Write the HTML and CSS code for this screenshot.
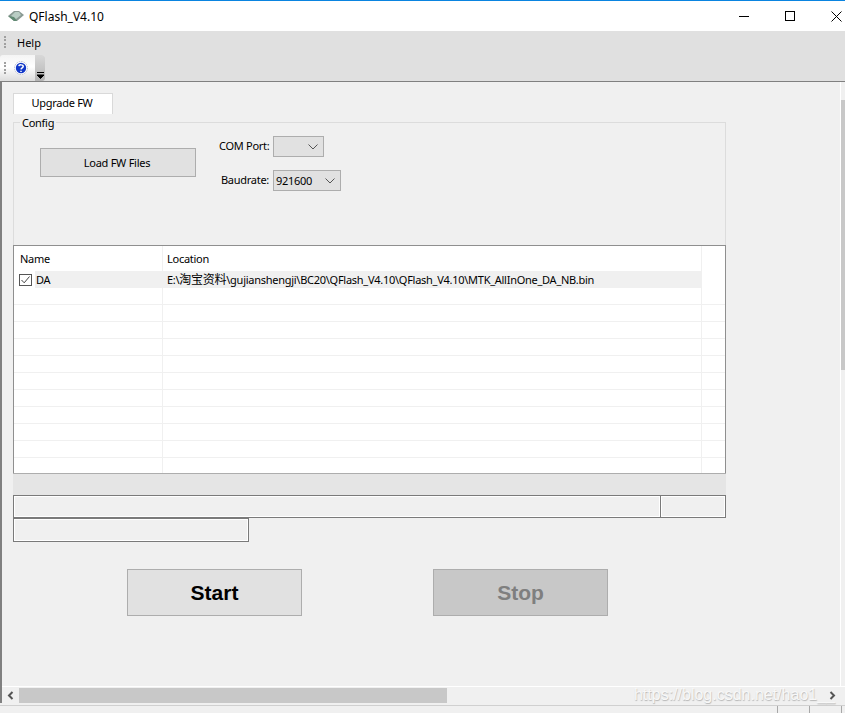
FILE: index.html
```html
<!DOCTYPE html>
<html lang="en">
<head>
  <meta charset="UTF-8">
  <title>QFlash_V4.10</title>
  <link rel="stylesheet" href="styles.css">
</head>
<body>
  <div class="window">
    <div class="titlebar">
      <svg class="app-icon" width="16" height="10" viewBox="0 0 16 10">
        <path d="M0 5 L6 0 H11 L16 4 L9 10 H6 Z" fill="#8a9a94"/>
        <path d="M3 5 L7 1 H11 L13 4 L8 8 Z" fill="#b9cdc4"/>
        <path d="M0 5 L6 10 H9 L6 6 Z" fill="#5f8a72"/>
      </svg>
      <span class="app-title">QFlash_V4.10</span>
      <div class="win-buttons">
        <svg width="11" height="11" viewBox="0 0 11 11"><path d="M0 5.5 H10" stroke="#000" fill="none"/></svg>
        <svg width="11" height="11" viewBox="0 0 11 11"><rect x="0.5" y="0.5" width="9" height="9" stroke="#000" fill="none"/></svg>
        <svg width="11" height="11" viewBox="0 0 11 11"><path d="M0.5 0.5 L10.5 10.5 M10.5 0.5 L0.5 10.5" stroke="#000" fill="none"/></svg>
      </div>
    </div>

    <div class="menubar">
      <span class="grip"></span>
      <span class="menu-item">Help</span>
    </div>

    <div class="toolbar">
      <div class="tool-group">
        <span class="grip"></span>
        <svg class="help-icon" width="14" height="14" viewBox="0 0 14 14">
          <circle cx="7" cy="7" r="6.5" fill="#fff" stroke="#b8bcd0" stroke-dasharray="1.5 1"/>
          <circle cx="7" cy="7" r="5.2" fill="#1238c8"/>
          <path d="M4.8 5.2 C5 3.4 9.2 3.4 9.2 5.4 C9.2 6.8 7.2 6.8 7 8.4 M7 9.8 V11" stroke="#fff" stroke-width="1.5" fill="none"/>
        </svg>
        <div class="tool-overflow">
          <svg width="7" height="7" viewBox="0 0 7 7"><path d="M0 0.5 H7 M0 3 H7 L3.5 6.5 Z" stroke="#000" fill="#000" stroke-width="1"/></svg>
        </div>
      </div>
    </div>

    <div class="main">
      <div class="content">
        <div class="tab">Upgrade FW</div>

        <div class="group">
          <span class="group-title">Config</span>
          <button class="btn load-btn">Load FW Files</button>
          <div class="fields">
            <div class="field">
              <label>COM Port:</label>
              <div class="combo combo-com"><span></span><svg width="10" height="6" viewBox="0 0 10 6"><path d="M0.5 0.5 L5 5 L9.5 0.5" stroke="#555" fill="none"/></svg></div>
            </div>
            <div class="field">
              <label>Baudrate:</label>
              <div class="combo combo-baud"><span>921600</span><svg width="10" height="6" viewBox="0 0 10 6"><path d="M0.5 0.5 L5 5 L9.5 0.5" stroke="#555" fill="none"/></svg></div>
            </div>
          </div>
        </div>

        <div class="file-table">
          <table>
            <colgroup><col class="col-name"><col class="col-location"><col class="col-rest"></colgroup>
            <thead>
              <tr><th>Name</th><th class="th-location">Location</th><th></th></tr>
            </thead>
            <tbody>
              <tr class="selected">
                <td class="name-cell">
                  <span class="check"><svg width="13" height="12" viewBox="0 0 13 12"><rect x="0.5" y="0.5" width="12" height="11" fill="#fff" stroke="#555"/><path d="M2.5 6 L5.2 8.8 L10.5 2.5" stroke="#444" fill="none"/></svg></span>
                  <span class="name-text">DA</span>
                </td>
                <td>E:\<span class="cjk">淘宝资料</span>\gujianshengji\BC20\QFlash_V4.10\QFlash_V4.10\MTK_AllInOne_DA_NB.bin</td>
                <td class="blank"></td>
              </tr>
              <tr><td></td><td></td><td></td></tr>
              <tr><td></td><td></td><td></td></tr>
              <tr><td></td><td></td><td></td></tr>
              <tr><td></td><td></td><td></td></tr>
              <tr><td></td><td></td><td></td></tr>
              <tr><td></td><td></td><td></td></tr>
              <tr><td></td><td></td><td></td></tr>
              <tr><td></td><td></td><td></td></tr>
              <tr><td></td><td></td><td></td></tr>
              <tr><td></td><td></td><td></td></tr>
              <tr class="last"><td></td><td></td><td></td></tr>
            </tbody>
          </table>
        </div>

        <div class="gray-bar"></div>

        <div class="status-row">
          <div class="sunken status-long"></div>
          <div class="sunken status-short"></div>
        </div>
        <div class="sunken status-small"></div>

        <div class="actions">
          <button class="btn big-btn">Start</button>
          <button class="btn big-btn disabled">Stop</button>
        </div>
      </div>

      <div class="vscroll"><div class="vthumb"></div></div>

      <div class="hscroll">
        <svg class="arrow" width="7" height="9" viewBox="0 0 7 9"><path d="M5.5 1 L2 4.5 L5.5 8" stroke="#555" stroke-width="2" fill="none"/></svg>
        <div class="htrack"><div class="hthumb"></div></div>
        <svg class="arrow" width="7" height="9" viewBox="0 0 7 9"><path d="M1.5 1 L5 4.5 L1.5 8" stroke="#555" stroke-width="2" fill="none"/></svg>
      </div>
      <span class="watermark">https://blog.csdn.net/hao1__</span>
    </div>

    <div class="statusbar">
      <span class="sep"></span>
      <span class="sep"></span>
      <span class="sep"></span>
    </div>
  </div>
</body>
</html>
```

FILE: styles.css
```css
* {
  box-sizing: border-box;
}
body {
  margin: 0;
  background: #f0f0f0;
  color: #000;
  font-family: "Noto Sans", "Noto Sans CJK SC", sans-serif;
  font-size: 11px;
  letter-spacing: -0.27px;
}
.window {
  display: flex;
  flex-direction: column;
  width: 845px;
  height: 713px;
  overflow: hidden;
}
.titlebar {
  display: flex;
  align-items: center;
  height: 31px;
  padding-left: 8px;
  background: #fff;
  border-top: 1px solid #0a84e0;
}
.app-icon {
  margin-right: 5px;
}
.app-title {
  font-size: 12px;
  letter-spacing: 0;
}
.win-buttons {
  display: flex;
  gap: 35px;
  margin-left: auto;
  margin-right: 3px;
}
.menubar {
  display: flex;
  align-items: center;
  height: 24px;
  padding: 0 0 2px 4px;
  background: #e0e0e0;
}
.grip {
  display: block;
  width: 2px;
  height: 12px;
  border-left: 2px dotted #a0a0a0;
}
.menu-item {
  margin-left: 11px;
  letter-spacing: 0;
}
.toolbar {
  height: 27px;
  background: #e0e0e0;
  border-bottom: 1px solid #808080;
}
.tool-group {
  display: flex;
  align-items: center;
  width: 45px;
  height: 26px;
  padding-left: 4px;
  border-radius: 3px;
  background: linear-gradient(#f4f4f4, #fff 45%, #dcdcdc);
}
.help-icon {
  margin-left: 8px;
}
.tool-overflow {
  display: flex;
  align-items: flex-end;
  justify-content: center;
  width: 10px;
  height: 26px;
  margin-left: auto;
  padding-bottom: 2px;
  border-radius: 0 3px 3px 0;
  background: linear-gradient(#d8d8d8, #b4b4b4);
}
.main {
  position: relative;
  display: grid;
  flex: 1;
  grid-template-columns: 1fr 5px;
  grid-template-rows: 1fr 17px;
  border-left: 2px solid #808080;
  background: #f0f0f0;
}
.content {
  padding: 11px 0 0 11px;
}
.tab {
  width: 100px;
  height: 21px;
  padding-right: 2px;
  line-height: 17px;
  text-align: center;
  background: #fff;
  border: 1px solid #d9d9d9;
  border-bottom: none;
}
.group {
  position: relative;
  display: flex;
  width: 713px;
  height: 123px;
  margin-top: 8px;
  border: 1px solid #dcdcdc;
  border-bottom: none;
}
.group-title {
  position: absolute;
  top: -8px;
  left: 6px;
  padding: 0 2px;
  line-height: 15px;
  background: #f0f0f0;
}
.btn {
  padding: 0;
  font-family: inherit;
  font-size: 11px;
  letter-spacing: -0.27px;
  color: #000;
  background: #e1e1e1;
  border: 1px solid #adadad;
}
.load-btn {
  width: 156px;
  height: 29px;
  margin: 25px 0 0 26px;
  padding-right: 2px;
}
.fields {
  display: flex;
  flex-direction: column;
  gap: 13px;
  margin: 13px 0 0 23px;
}
.field {
  display: flex;
  align-items: center;
  gap: 4px;
}
.field label {
  width: 50px;
  padding-bottom: 2px;
  white-space: nowrap;
  text-align: right;
}
.combo {
  display: flex;
  align-items: center;
  justify-content: space-between;
  height: 21px;
  padding: 0 5px 0 2px;
  background: #e1e1e1;
  border: 1px solid #adadad;
}
.combo-com {
  width: 51px;
}
.combo-baud {
  width: 68px;
}
.file-table {
  width: 713px;
  height: 228px;
  background: #fff;
  border: 1px solid #8f8f8f;
  border-bottom: none;
  overflow: hidden;
}
table {
  width: 712px;
  table-layout: fixed;
  border-collapse: separate;
  border-spacing: 0;
}
.col-name {
  width: 149px;
}
.col-rest {
  width: 24px;
}
th {
  height: 25px;
  padding: 0 0 0 6px;
  font-weight: normal;
  text-align: left;
  border-right: 1px solid #f0f0f0;
}
th.th-location {
  padding-left: 4px;
}
th:last-child {
  border-right: none;
}
td {
  height: 17px;
  padding: 0 0 0 4px;
  line-height: 16px;
  white-space: nowrap;
  border-right: 1px solid #f0f0f0;
  border-bottom: 1px solid #f0f0f0;
}
td:last-child {
  border-right: none;
}
.cjk {
  font-size: 12px;
  line-height: 14px;
}
.selected td {
  background: #f0f0f0;
  border-right: none;
  border-bottom: none;
}
.selected .blank {
  background: #fff;
}
.selected .name-cell {
  padding: 0;
  background: linear-gradient(90deg, #fff 21px, #f0f0f0 21px);
}
.name-cell {
  display: flex;
  align-items: center;
}
.check {
  display: flex;
  margin: 0 4px 0 5px;
}
.last td {
  border-bottom: none;
}
.gray-bar {
  width: 713px;
  height: 22px;
  background: #e5e5e5;
  border-top: 1px solid #adadad;
}
.sunken {
  height: 23px;
  border: 1px solid #7a7a7a;
  box-shadow: inset 1px 1px 0 #fff, inset -1px -1px 0 #fff;
}
.status-row {
  display: flex;
  width: 713px;
}
.status-long {
  width: 648px;
}
.status-short {
  width: 65px;
  border-left: none;
}
.status-small {
  width: 236px;
  height: 24px;
}
.actions {
  display: flex;
  gap: 131px;
  margin: 27px 0 0 114px;
}
.big-btn {
  width: 175px;
  height: 47px;
  font-family: "Liberation Sans", Arial, sans-serif;
  font-size: 21px;
  font-weight: bold;
  letter-spacing: 0;
}
.disabled {
  color: #7f7f7f;
  background: #c8c8c8;
}
.vscroll {
  padding-top: 18px;
  background: #f0f0f0;
  border-left: 1px solid #fff;
}
.vthumb {
  height: 270px;
  background: #c8c8c8;
}
.hscroll {
  display: flex;
  grid-column: 1 / 3;
  align-items: center;
  height: 17px;
  padding-right: 9px;
  border-top: 1px solid #fff;
}
.arrow {
  flex: none;
  margin-left: 5px;
}
.htrack {
  flex: 1;
  height: 15px;
  margin-left: 5px;
}
.hthumb {
  width: 428px;
  height: 15px;
  background: #c8c8c8;
}
.watermark {
  position: absolute;
  right: 10px;
  bottom: -2px;
  font-family: "Liberation Sans", Arial, sans-serif;
  font-size: 16px;
  line-height: 20px;
  letter-spacing: 0;
  color: #f8f8f8;
  text-shadow: 0.5px 0.5px 1px #b4b4b4;
}
.statusbar {
  display: flex;
  justify-content: flex-end;
  gap: 31px;
  height: 10px;
  padding: 3px 3px 0 0;
  background: linear-gradient(#f0f0f0 2px, #d0d0d0 2px, #d0d0d0 3px, #f0f0f0 3px);
}
.sep {
  width: 1px;
  background: #a8a8a8;
}
```
